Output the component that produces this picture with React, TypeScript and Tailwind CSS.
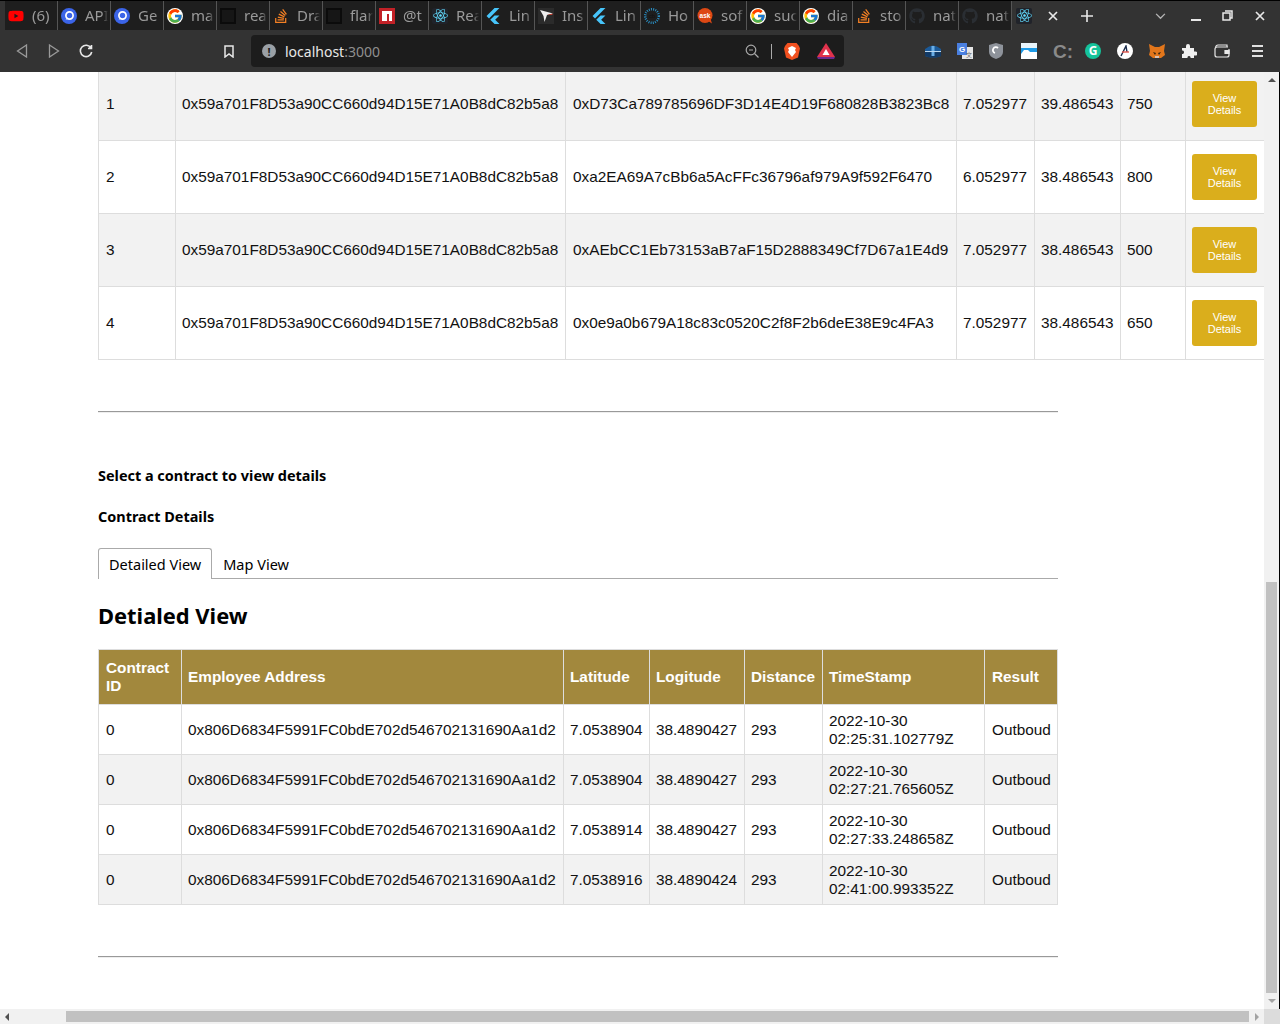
import { FaGithub, FaReact, FaStackOverflow, FaYoutube } from "react-icons/fa";
import { FcGoogle } from "react-icons/fc";
import { SiFlutter } from "react-icons/si";
import type { ReactNode } from "react";

function PostmanLike() {
  return (
    <svg viewBox="0 0 16 16" className="h-4 w-4">
      <circle cx="8" cy="8" r="8" fill="#3b64e8" />
      <circle cx="8.5" cy="7.5" r="3.6" fill="none" stroke="#fff" strokeWidth="1.7" />
      <path d="M4.5 12l2-2.5 1 1z" fill="#fff" />
    </svg>
  );
}

function DarkSquare() {
  return <span className="box-border block h-4 w-4 border-2 border-[#0b0b0b] bg-[#161616]" />;
}

function NpmIcon() {
  return (
    <svg viewBox="0 0 16 16" className="h-4 w-4">
      <rect width="16" height="16" fill="#c12127" />
      <path d="M3 3h10v10h-3V6H8v7H3z" fill="#fff" />
    </svg>
  );
}

function InstaLike() {
  return (
    <svg viewBox="0 0 16 16" className="h-4 w-4">
      <rect width="16" height="16" fill="#2b2b2b" />
      <path d="M2 2l13 3.5-6 1.5-2.500 7-1-6z" fill="#eee" />
      <path d="M9 7l6-1.500-1 1.500z" fill="#c0392b" />
    </svg>
  );
}

function CbIcon() {
  return (
    <svg viewBox="0 0 16 16" className="h-4 w-4">
      <circle cx="8" cy="8" r="6.800" fill="none" stroke="#2a8fc4" strokeWidth="2.400" strokeDasharray="1 1.200" />
      <text x="8" y="10" textAnchor="middle" fontSize="6" fontFamily="Liberation Sans" fill="#111">cb</text>
    </svg>
  );
}

function AskIcon() {
  return (
    <svg viewBox="0 0 16 16" className="h-4 w-4">
      <circle cx="8" cy="7.500" r="7.500" fill="#dd4814" />
      <path d="M11 13l4 2.500-1.500-4.500z" fill="#dd4814" />
      <text x="8" y="10" textAnchor="middle" fontSize="6.500" fontWeight="700" fontFamily="Liberation Sans" fill="#fff">ask</text>
    </svg>
  );
}

function ReactTile() {
  return (
    <span className="flex h-4 w-4 shrink-0 items-center justify-center rounded-[2px] bg-[#20232a]">
      <FaReact className="h-[15px] w-[15px] text-[#61dafb]" />
    </span>
  );
}

const google = <FcGoogle className="h-4 w-4 rounded-full bg-white" />;
const flutter = <SiFlutter className="h-4 w-4 text-[#47c5fb]" />;
const stack = <FaStackOverflow className="h-4 w-4 text-[#f48024]" />;
const github = <FaGithub className="h-4 w-4 text-[#2a2e33]" />;
const postman = <PostmanLike />;

const tabs: { icon: ReactNode; label: string }[] = [
  { icon: <FaYoutube className="h-4 w-4 text-[#ff0000]" />, label: "(6)" },
  { icon: postman, label: "API" },
  { icon: postman, label: "Ge" },
  { icon: google, label: "ma" },
  { icon: <DarkSquare />, label: "rea" },
  { icon: stack, label: "Dra" },
  { icon: <DarkSquare />, label: "flar" },
  { icon: <NpmIcon />, label: "@t" },
  { icon: <ReactTile />, label: "Rea" },
  { icon: flutter, label: "Lin" },
  { icon: <InstaLike />, label: "Ins" },
  { icon: flutter, label: "Lin" },
  { icon: <CbIcon />, label: "Ho" },
  { icon: <AskIcon />, label: "sof" },
  { icon: google, label: "suc" },
  { icon: google, label: "dia" },
  { icon: stack, label: "sto" },
  { icon: github, label: "nat" },
  { icon: github, label: "nat" },
];

function BrowserChrome() {
  return (
    <div className="h-[72px] shrink-0 bg-[#333333] font-['Noto_Sans',sans-serif] text-[15px]">
      <div className="flex h-[30px] border-t border-black pl-[5px]">
        {tabs.map((t, i) => (
          <div key={i} className="flex h-[29px] w-[53px] shrink-0 items-center overflow-hidden border-r border-[#555] bg-[#1e1e1e] pl-[3px] last:w-[52px] last:border-r-0">
            <span className="shrink-0">{t.icon}</span>
            <span className="ml-2 w-[25px] whitespace-nowrap text-[#9a9a9a] [mask-image:linear-gradient(to_right,black_68%,transparent_92%)]">{t.label}</span>
          </div>
        ))}
        <div className="flex h-[29px] w-[61px] shrink-0 items-center pl-[4px]">
          <ReactTile />
          <svg viewBox="0 0 10 10" className="ml-[16px] h-[10px] w-[10px]" stroke="#e8e8e8" strokeWidth="1.700">
            <path d="M1 1l8 8M9 1l-8 8" />
          </svg>
        </div>
        <svg viewBox="0 0 12 12" className="ml-[8px] mt-[9px] h-3 w-3" stroke="#e8e8e8" strokeWidth="1.600">
          <path d="M6 0v12M0 6h12" />
        </svg>
        <svg viewBox="0 0 12 8" fill="none" className="ml-[62px] mt-[12px] h-[7px] w-[11px]" stroke="#b5b5b5" strokeWidth="1.500">
          <path d="M1 1l5 5 5-5" />
        </svg>
        <span className="ml-[25px] mt-[18px] h-[2px] w-[10px] bg-[#e8e8e8]" />
        <svg viewBox="0 0 11 11" fill="none" className="ml-[21px] mt-[9px] h-[11px] w-[11px]" stroke="#e8e8e8" strokeWidth="1.500">
          <path d="M3 1h7v7H8M1 3h7v7H1z" />
        </svg>
        <svg viewBox="0 0 10 10" className="ml-[22px] mt-[10px] h-[10px] w-[10px]" stroke="#e8e8e8" strokeWidth="1.700">
          <path d="M1 1l8 8M9 1l-8 8" />
        </svg>
      </div>
      <div className="flex h-[42px] items-center">
        <svg viewBox="0 0 12 14" fill="none" className="ml-[16px] h-[14px] w-[12px]" stroke="#9a9a9a" strokeWidth="1.300">
          <path d="M10.500 1L1.500 7l9 6z" />
        </svg>
        <svg viewBox="0 0 12 14" fill="none" className="ml-[20px] h-[14px] w-[12px]" stroke="#9a9a9a" strokeWidth="1.300">
          <path d="M1.500 1l9 6-9 6z" />
        </svg>
        <svg viewBox="0 0 14 14" fill="none" className="ml-[19px] h-[14px] w-[14px]" stroke="#e8e8e8" strokeWidth="1.600">
          <path d="M12 4A5.700 5.700 0 1 0 12.700 8" />
          <path d="M12.500 1v3.500H9" fill="#e8e8e8" />
        </svg>
        <svg viewBox="0 0 10 13" fill="none" className="ml-[131px] h-[13px] w-[10px]" stroke="#e8e8e8" strokeWidth="1.500">
          <path d="M1 1h8v11L5 9l-4 3z" />
        </svg>
        <div className="ml-[17px] flex h-[32px] w-[593px] items-center rounded-[4px] bg-[#1c1c1c]">
          <span className="ml-[11px] flex h-[14px] w-[14px] items-center justify-center rounded-full bg-[#9aa0a6] text-[11px] font-bold leading-none text-[#1c1c1c]">!</span>
          <span className="ml-[9px] text-[14px] text-[#e8e8e8]">localhost<span className="text-[#8f8f8f]">:3000</span></span>
          <svg viewBox="0 0 14 14" fill="none" className="ml-auto h-[14px] w-[14px]" stroke="#a8a8a8" strokeWidth="1.200">
            <circle cx="6" cy="6" r="4.800" />
            <path d="M4 6h4M9.500 9.500L13.500 13.500" />
          </svg>
          <span className="ml-[12px] h-[15px] w-px bg-[#aaa]" />
          <svg viewBox="0 0 16 18" className="ml-[12px] h-[18px] w-[16px]">
            <path d="M3.500 1h9L15 4l1 2.500-2 9L8 18l-6-2.500-2-9L1 4z" fill="#f1501f" />
            <path d="M4 6l4-2 4 2-1 2 1 2-4 5-4-5 1-2z" fill="#fff" />
          </svg>
          <svg viewBox="0 0 18 16" className="ml-[17px] mr-[9px] h-[16px] w-[18px]">
            <path d="M9 0l9 14H0z" fill="#e0324c" />
            <path d="M0 14h18l-1 2H1z" fill="#6b2a8e" />
            <path d="M9 6l3.500 6h-7z" fill="#fff" />
          </svg>
        </div>
        <svg viewBox="0 0 16 14" className="ml-[81px] h-[14px] w-[16px]">
          <path d="M0 5q8-7 16 0v7q-8 3-16 0z" fill="#1b5a99" />
          <path d="M0 8h16v4q-8 3-16 0z" fill="#123a66" />
          <path d="M6.500 2h3v10h-3z" fill="#6aaee6" />
          <path d="M0 7.500h16" stroke="#bcd8f0" />
        </svg>
        <svg viewBox="0 0 16 16" className="ml-[16px] h-4 w-4">
          <rect x="5" y="4" width="11" height="12" fill="#e6e6e6" />
          <rect width="10" height="12" fill="#4a7fe0" />
          <text x="5" y="9" textAnchor="middle" fontSize="8" fontWeight="700" fontFamily="Liberation Sans" fill="#fff">G</text>
          <text x="12" y="14" textAnchor="middle" fontSize="6" fontFamily="Noto Sans CJK SC" fill="#666">文</text>
        </svg>
        <svg viewBox="0 0 14 16" fill="none" className="ml-[16px] h-4 w-[14px]">
          <path d="M7 0l7 2v7q0 5-7 7-7-2-7-7V2z" fill="#8e939b" />
          <path d="M9 5A3 3 0 1 0 6 10" stroke="#fff" strokeWidth="1.800" />
        </svg>
        <svg viewBox="0 0 16 16" className="ml-[18px] h-4 w-4">
          <rect width="16" height="16" fill="#1e9ae6" />
          <path d="M0 0h16v5H0z" fill="#e8f4fb" />
          <path d="M0 11l3-4h4l2 2h7v7H0z" fill="#fff" />
        </svg>
        <span className="ml-[16px] flex h-4 w-[16px] items-center font-['Liberation_Sans',sans-serif] text-[19px] font-bold leading-none text-[#8a8a8a]">C:</span>
        <span className="ml-[16px] flex h-4 w-4 items-center justify-center rounded-full bg-[#15c39a] text-[12px] font-bold leading-none text-white">G</span>
        <span className="ml-[16px] flex h-4 w-4 items-center justify-center rounded-full bg-white">
          <svg viewBox="0 0 12 12" className="h-3 w-3" fill="none" strokeWidth="1.400">
            <path d="M2 11L7 1l1 6" stroke="#1a2b4a" />
            <path d="M3 7h7" stroke="#e2574c" />
          </svg>
        </span>
        <svg viewBox="0 0 16 16" className="ml-[16px] h-4 w-4">
          <path d="M0 1l6 3h4l6-3-1 7 1 4-4 3H4l-4-3 1-4z" fill="#e2761b" />
          <path d="M4 9l3 1-1 2zM12 9l-3 1 1 2z" fill="#33230f" />
          <path d="M6 13h4v2H6z" fill="#d7c1b3" />
        </svg>
        <svg viewBox="0 0 16 16" className="ml-[16px] h-4 w-4" fill="#f0f0f0">
          <path d="M1 5h4V3a2 2 0 0 1 4 0v2h4v3.500h1.500a2 2 0 0 1 0 4H13V15H9.500v-1a1.600 1.600 0 0 0-3 0v1H1v-4h1a2 2 0 0 0 0-3.500H1z" />
        </svg>
        <svg viewBox="0 0 16 14" fill="none" className="ml-[17px] h-[14px] w-4" stroke="#e8e8e8" strokeWidth="1.200">
          <path d="M14 3H3a2 2 0 0 0-2 2v6a2 2 0 0 0 2 2h10a2 2 0 0 0 2-2V5" />
          <path d="M1.500 3.500Q2 1 4 1h9v2" />
          <path d="M15 6.500h-4v3h4z" fill="#e8e8e8" />
        </svg>
        <span className="ml-[22px] flex w-[11px] flex-col gap-[3px]">
          <span className="h-[2px] bg-[#e0e0e0]" />
          <span className="h-[2px] bg-[#e0e0e0]" />
          <span className="h-[2px] bg-[#e0e0e0]" />
        </span>
      </div>
    </div>
  );
}

const contracts = [
  ["1", "0x59a701F8D53a90CC660d94D15E71A0B8dC82b5a8", "0xD73Ca789785696DF3D14E4D19F680828B3823Bc8", "7.052977", "39.486543", "750"],
  ["2", "0x59a701F8D53a90CC660d94D15E71A0B8dC82b5a8", "0xa2EA69A7cBb6a5AcFFc36796af979A9f592F6470", "6.052977", "38.486543", "800"],
  ["3", "0x59a701F8D53a90CC660d94D15E71A0B8dC82b5a8", "0xAEbCC1Eb73153aB7aF15D2888349Cf7D67a1E4d9", "7.052977", "38.486543", "500"],
  ["4", "0x59a701F8D53a90CC660d94D15E71A0B8dC82b5a8", "0x0e9a0b679A18c83c0520C2f8F2b6deE38E9c4FA3", "7.052977", "38.486543", "650"],
];

const employee = "0x806D6834F5991FC0bdE702d546702131690Aa1d2";
const details = [
  ["0", employee, "7.0538904", "38.4890427", "293", "2022-10-30 02:25:31.102779Z", "Outboud"],
  ["0", employee, "7.0538904", "38.4890427", "293", "2022-10-30 02:27:21.765605Z", "Outboud"],
  ["0", employee, "7.0538914", "38.4890427", "293", "2022-10-30 02:27:33.248658Z", "Outboud"],
  ["0", employee, "7.0538916", "38.4890424", "293", "2022-10-30 02:41:00.993352Z", "Outboud"],
];

const headers = ["Contract ID", "Employee Address", "Latitude", "Logitude", "Distance", "TimeStamp", "Result"];

function ContractsTable() {
  return (
    <table className="-mt-[5px] ml-[98px] w-[1166px] table-fixed border-collapse font-['Liberation_Sans',sans-serif] text-[15.350px] text-[#111]">
      <colgroup>
        <col className="w-[77px]" />
        <col className="w-[390px]" />
        <col className="w-[391px]" />
        <col className="w-[78px]" />
        <col className="w-[86px]" />
        <col className="w-[65px]" />
        <col className="w-[79px]" />
      </colgroup>
      <tbody>
        {contracts.map((row) => (
          <tr key={row[0]} className="h-[73px] odd:bg-[#f2f2f2]">
            {row.map((cell, i) => (
              <td key={i} className="whitespace-nowrap border border-[#dddddd] pl-[6px] first:pl-[7px] nth-3:pl-[7px]">{cell}</td>
            ))}
            <td className="border border-[#dddddd] border-r-0 pl-[6px]">
              <button className="block h-[46px] w-[65px] rounded-[3px] bg-[#daae1c] text-center text-[11px] leading-[12px] text-white">
                View<br />Details
              </button>
            </td>
          </tr>
        ))}
      </tbody>
    </table>
  );
}

function DetailsTable() {
  return (
    <table className="mt-[17px] w-[959px] table-fixed border-collapse font-['Liberation_Sans',sans-serif] text-[15.350px] text-[#111]">
      <colgroup>
        <col className="w-[83px]" />
        <col className="w-[382px]" />
        <col className="w-[86px]" />
        <col className="w-[95px]" />
        <col className="w-[78px]" />
        <col className="w-[162px]" />
        <col className="w-[73px]" />
      </colgroup>
      <thead>
        <tr className="h-[55px] bg-[#a2883d] text-left text-white">
          {headers.map((h) => (
            <th key={h} className="border border-[#dddddd] pl-[6px] font-bold leading-[18px] first:pl-[7px] last:pl-[7px]">{h}</th>
          ))}
        </tr>
      </thead>
      <tbody>
        {details.map((row, r) => (
          <tr key={r} className="h-[50px] even:bg-[#f2f2f2]">
            {row.map((cell, i) => (
              <td key={i} className="border border-[#dddddd] pl-[6px] leading-[18px] first:pl-[7px] last:pl-[7px]">{cell}</td>
            ))}
          </tr>
        ))}
      </tbody>
    </table>
  );
}

export default function App() {
  return (
    <div className="flex h-[1024px] w-[1280px] flex-col overflow-hidden bg-white">
      <BrowserChrome />
      <div className="flex min-h-0 flex-1">
        <div className="flex min-w-0 flex-1 flex-col">
          <div className="min-h-0 flex-1 overflow-hidden">
            <ContractsTable />
            <div className="ml-[98px] w-[960px] font-['Noto_Sans',sans-serif] text-black">
              <hr className="mt-[51px] border-t-[1px] border-b-[1px] border-t-[#999] border-b-[#eee]" />
              <p className="mt-[53px] text-[14.450px] font-bold leading-[20px]">Select a contract to view details</p>
              <p className="mt-[21px] text-[14.450px] font-bold leading-[20px]">Contract Details</p>
              <div className="mt-[21px] flex h-[31px] border-b border-[#aaa] text-[14.500px]">
                <div className="flex h-[31px] items-center rounded-t-[3px] border border-b-0 border-[#aaa] bg-white px-[10px] pt-[2px]">Detailed View</div>
                <div className="flex h-[30px] items-center px-[11px] pt-[3px]">Map View</div>
              </div>
              <h2 className="mt-[21px] text-[21.900px] font-bold leading-[32px]">Detialed View</h2>
              <DetailsTable />
              <hr className="mt-[51px] border-t-[1px] border-b-[1px] border-t-[#999] border-b-[#eee]" />
            </div>
          </div>
          <div className="flex h-[15px] shrink-0 items-center bg-[#f1f1f1] pl-[5px] pr-[5px]">
            <span className="h-0 w-0 border-y-[4px] border-r-[4px] border-y-transparent border-r-[#505050]" />
            <span className="ml-[57px] h-[11px] w-[1183px] bg-[#c1c1c1]" />
            <span className="ml-auto h-0 w-0 border-y-[4px] border-l-[4px] border-y-transparent border-l-[#a3a3a3]" />
          </div>
        </div>
        <div className="flex w-[16px] shrink-0 flex-col">
          <div className="flex flex-1 flex-col items-center border-r border-black bg-[#f1f1f1]">
            <span className="mt-[6px] h-0 w-0 border-x-[4px] border-b-[4px] border-x-transparent border-b-[#505050]" />
            <span className="mt-[500px] h-[411px] w-[11px] bg-[#c1c1c1]" />
            <span className="mt-[6px] h-0 w-0 border-x-[4px] border-t-[4px] border-x-transparent border-t-[#a3a3a3]" />
          </div>
          <div className="h-[15px] bg-[#dcdcdc]" />
        </div>
      </div>
    </div>
  );
}
